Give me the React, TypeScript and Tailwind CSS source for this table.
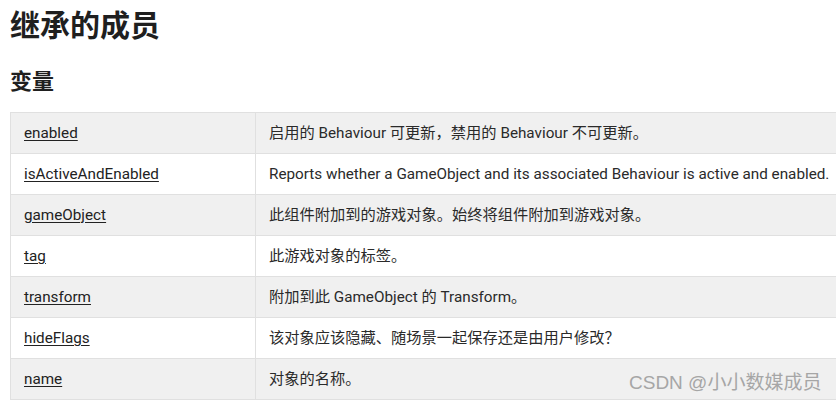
import React from "react";

const rows: [string, string][] = [
  ["enabled", "启用的 Behaviour 可更新，禁用的 Behaviour 不可更新。"],
  ["isActiveAndEnabled", "Reports whether a GameObject and its associated Behaviour is active and enabled."],
  ["gameObject", "此组件附加到的游戏对象。始终将组件附加到游戏对象。"],
  ["tag", "此游戏对象的标签。"],
  ["transform", "附加到此 GameObject 的 Transform。"],
  ["hideFlags", "该对象应该隐藏、随场景一起保存还是由用户修改？"],
  ["name", "对象的名称。"],
];

export default function App() {
  return (
    <div
      className="relative w-[836px] h-[410px] overflow-hidden bg-white text-[#222]"
      style={{ fontFamily: "Roboto, 'Noto Sans CJK SC', sans-serif" }}
    >
      <div className="pl-[10px] pt-[6px]">
        <h1 className="text-[30px] font-bold leading-[40px] text-[#1f1f1f]">继承的成员</h1>
        <h2 className="mt-[21px] text-[22px] font-bold leading-[30px] text-[#1f1f1f]">变量</h2>
        <table className="mt-[15px] w-[900px] border-collapse text-[15.25px] text-[#2a2a2a]">
          <tbody>
            {rows.map(([name, desc], i) => (
              <tr key={name} className={i % 2 === 0 ? "bg-[#f0f0f0]" : "bg-white"}>
                <td className="w-[245px] h-[41px] border border-[#e0e0e0] px-[13px] py-0 align-middle">
                  <a className="underline underline-offset-2 decoration-1 text-[#222]">{name}</a>
                </td>
                <td className="h-[41px] border border-[#e0e0e0] px-[13px] py-0 align-middle">{desc}</td>
              </tr>
            ))}
          </tbody>
        </table>
      </div>
      <div
        className="absolute left-[629px] top-[370px] text-[19px] leading-[26px] text-[#a6a6a6]"
        style={{ fontFamily: "'Liberation Sans', 'Noto Sans CJK SC', sans-serif" }}
      >
        CSDN @小小数媒成员
      </div>
    </div>
  );
}
